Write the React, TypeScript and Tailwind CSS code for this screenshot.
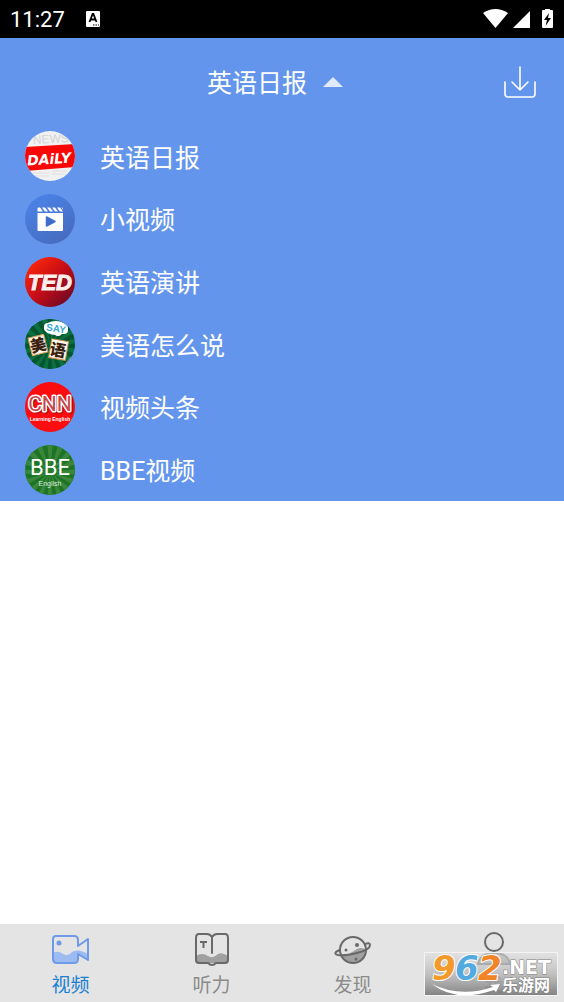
import { useState } from "react";
import type { ReactNode } from "react";

const RAYS = Array.from({ length: 16 }, (_, i) => i * 22.5);

function Rays({ cx, cy, color }: { cx: number; cy: number; color: string }) {
  return (
    <g fill={color}>
      {RAYS.map((angle) => (
        <path key={angle} d={`M${cx} ${cy} l50 -5 v10 Z`} transform={`rotate(${angle} ${cx} ${cy})`} />
      ))}
    </g>
  );
}

function Avatar({ id, children }: { id: string; children: ReactNode }) {
  return (
    <svg viewBox="0 0 50 50" className="size-[50px] shrink-0" aria-hidden="true">
      <clipPath id={id}>
        <circle cx="25" cy="25" r="25" />
      </clipPath>
      <g clipPath={`url(#${id})`}>{children}</g>
    </svg>
  );
}

const channels = [
  {
    name: "英语日报",
    icon: (
      <Avatar id="daily">
        <rect width="50" height="50" fill="#f1f1f1" />
        <text x="26" y="12" textAnchor="middle" fontFamily="Liberation Sans" fontSize="12" fill="#d2d2d2" transform="rotate(-3 25 12)">NEWS</text>
        <path d="M6 42 H24 M27 40 H42 M8 45 H24 M27 43 H41" stroke="#dfdfdf" strokeWidth="1" />
        <path d="M0 16 L50 13 V36 L0 40 Z" fill="#f90606" />
        <text x="24" y="33" textAnchor="middle" fontFamily="DejaVu Sans" fontStyle="italic" fontWeight="700" fontSize="14" fill="#fff" transform="rotate(-4 25 27)">DAiLY</text>
      </Avatar>
    ),
  },
  {
    name: "小视频",
    icon: (
      <Avatar id="clips">
        <linearGradient id="clipsFill" x1="0.2" y1="0" x2="0.8" y2="1">
          <stop offset="0" stopColor="#4b83e8" />
          <stop offset="1" stopColor="#466bbd" />
        </linearGradient>
        <rect width="50" height="50" fill="url(#clipsFill)" />
        <path d="M12.500 19 H38 V36 Q38 37 37 37 H13.500 Q12.500 37 12.500 36 Z" fill="#fff" />
        <path d="M12.500 14.500 Q12.500 13.500 13.500 13.500 H15 L18 17.500 H12.500 Z M17 13.500 H20 L23 17.500 H20 Z M22 13.500 H25 L28 17.500 H25 Z M27 13.500 H30 L33 17.500 H30 Z M32 13.500 H35 L38 17.500 H35 Z M36.500 13.500 H37 Q38 13.500 38 14.500 V15.500 Z" fill="#fff" />
        <path d="M21.500 23 L30 27.500 L21.500 32 Z" fill="#3e6dcb" stroke="#3e6dcb" strokeWidth="1.500" strokeLinejoin="round" />
      </Avatar>
    ),
  },
  {
    name: "英语演讲",
    icon: (
      <Avatar id="ted">
        <linearGradient id="tedFill" x1="0.1" y1="0.1" x2="0.9" y2="0.9">
          <stop offset="0" stopColor="#fb2808" />
          <stop offset="0.5" stopColor="#c70d17" />
          <stop offset="1" stopColor="#6c0824" />
        </linearGradient>
        <rect width="50" height="50" fill="url(#tedFill)" />
        <text x="26" y="34" textAnchor="middle" fontFamily="Liberation Sans" fontStyle="italic" fontWeight="700" fontSize="22" fill="#7c0712">TED</text>
        <text x="25" y="33" textAnchor="middle" fontFamily="Liberation Sans" fontStyle="italic" fontWeight="700" fontSize="22" fill="#fdeeee" stroke="#fdeeee">TED</text>
      </Avatar>
    ),
  },
  {
    name: "美语怎么说",
    icon: (
      <Avatar id="say">
        <rect width="50" height="50" fill="#0b7040" />
        <Rays cx={25} cy={27} color="#04552f" />
        <g fill="#fff">
          <ellipse cx="31" cy="9" rx="12" ry="7" />
          <circle cx="23" cy="8" r="4" />
          <circle cx="39" cy="11" r="4" />
          <circle cx="33" cy="13" r="4" />
        </g>
        <text x="31" y="13" textAnchor="middle" fontFamily="Liberation Sans" fontWeight="700" fontSize="10" fill="#39a9dc" transform="rotate(8 31 10)">SAY</text>
        <g transform="rotate(-14 13 26)">
          <rect x="5" y="17" width="16" height="18" fill="#fff8e8" stroke="#d8a05f" />
          <text x="13" y="32" textAnchor="middle" fontFamily="Noto Sans CJK SC" fontWeight="900" fontSize="16" fill="#39200f">美</text>
        </g>
        <g transform="rotate(10 33 31)">
          <rect x="25" y="21" width="17" height="19" fill="#fff8e8" stroke="#c98b4d" />
          <text x="33" y="37" textAnchor="middle" fontFamily="Noto Sans CJK SC" fontWeight="900" fontSize="16" fill="#39200f">语</text>
        </g>
        <path d="M50 36 L38 50 H50 Z" fill="#d8dfd0" />
        <path d="M47 38 L41 45" stroke="#8d9b83" strokeWidth="2" />
      </Avatar>
    ),
  },
  {
    name: "视频头条",
    icon: (
      <Avatar id="cnn">
        <rect width="50" height="50" fill="#fd0d10" />
        <g fontFamily="Roboto" fontSize="21" textAnchor="middle" fill="none" strokeLinejoin="round">
          <text x="26" y="30" stroke="#a00a0c" strokeWidth="3">CNN</text>
          <text x="25" y="29" fill="#fff" stroke="#fff" strokeWidth="3">CNN</text>
          <text x="25" y="29" fill="#c4474a">CNN</text>
        </g>
        <text x="25" y="39" textAnchor="middle" fontFamily="Liberation Sans" fontWeight="700" fontSize="5" fill="#fff">Learning English</text>
      </Avatar>
    ),
  },
  {
    name: "BBE视频",
    icon: (
      <Avatar id="bbe">
        <rect width="50" height="50" fill="#1c7424" />
        <Rays cx={25} cy={27} color="#3a873c" />
        <text x="25" y="30" textAnchor="middle" fontFamily="Roboto" fontSize="22" fill="#fff">BBE</text>
        <text x="25" y="41" textAnchor="middle" fontFamily="Liberation Sans" fontSize="7" fill="#dcebdc">English</text>
      </Avatar>
    ),
  },
];

const tabs = [
  {
    label: "视频",
    icon: (
      <svg viewBox="0 0 40 36" className="h-9 w-10" fill="none" stroke="#6f9ae9" strokeWidth="2" strokeLinejoin="round" aria-hidden="true">
        <path d="M2 21 Q7 18 12 22 Q17 25 21 20 Q27 16 37 22 V28 L27 23 V29 Q27 31 25 31 H5 Q2 31 2 28 Z" fill="#9bbbf1" stroke="none" />
        <path d="M5 4 H23 Q27 4 27 8 V14 L37 7 V28 L27 22 V27 Q27 31 23 31 H6 Q2 31 2 27 V7 Q2 4 5 4 Z" />
        <circle cx="8" cy="11" r="2.500" fill="#6f9ae9" stroke="none" />
      </svg>
    ),
  },
  {
    label: "听力",
    icon: (
      <svg viewBox="0 0 40 36" className="h-9 w-10" fill="none" stroke="#696969" strokeWidth="2" strokeLinejoin="round" aria-hidden="true">
        <path d="M4 24 Q10 20 16 24 Q21 27 26 22 Q30 20 36 24 V31 H4 Z" fill="#a0a0a0" stroke="none" />
        <path d="M20 5 Q18 2 15 2 H7 Q4 2 4 6 V28 Q4 31 7 31 H16 Q18 33 20 33 Q22 33 24 31 H33 Q36 31 36 28 V6 Q36 2 33 2 H25 Q22 2 20 5 Z" />
        <path d="M20 5 V21" strokeLinecap="round" />
        <path d="M8 10 H15 M11.500 10 V16" strokeWidth="2" />
      </svg>
    ),
  },
  {
    label: "发现",
    icon: (
      <svg viewBox="0 0 40 36" className="h-9 w-10" fill="none" stroke="#696969" strokeWidth="2" aria-hidden="true">
        <path d="M7 22 Q14 24 21 19 Q26 14 32 17 Q34 19 33 22 Q31 31 20 31 Q11 31 7 22 Z" fill="#a0a0a0" stroke="none" />
        <circle cx="20" cy="18" r="13" />
        <path d="M32 12 Q37 10 37 13 Q37 18 24 21 Q12 24 5 23 Q1 22 3 20 Q4 19 7 18" strokeWidth="2" />
        <circle cx="24" cy="13" r="2" fill="#696969" stroke="none" />
        <circle cx="13" cy="18" r="1.500" fill="#696969" stroke="none" />
        <circle cx="23" cy="27" r="1.500" fill="#696969" stroke="none" />
      </svg>
    ),
  },
  {
    label: "我",
    icon: (
      <svg viewBox="0 0 40 36" className="h-9 w-10" fill="none" stroke="#696969" strokeWidth="2" aria-hidden="true">
        <path d="M4 32 Q6 21 20 21 Q34 21 36 32 Z" fill="#a0a0a0" />
        <circle cx="20" cy="10" r="9" fill="#e4e4e4" />
      </svg>
    ),
  },
];

function StatusBar() {
  return (
    <div className="flex h-[38px] items-center justify-between bg-black px-2.5 text-white">
      <div className="flex items-center gap-5">
        <span className="font-[Roboto,sans-serif] text-[22px]">11:27</span>
        <svg viewBox="0 0 16 16" className="size-4" aria-hidden="true">
          <rect x="1" width="14" height="16" rx="1" fill="#fff" />
          <path d="M4.500 11 L7.600 3 H8.400 L11.500 11 M6 8.500 H10" fill="none" stroke="#000" strokeWidth="1.800" />
          <path d="M8 14 h1.500 M10.500 14 h1.500 M13 14 h1" stroke="#000" strokeWidth="1" />
        </svg>
      </div>
      <svg viewBox="0 0 71 20" className="h-5 w-[71px]" fill="#fff" aria-hidden="true">
        <path d="M0 4 Q12.500 -4 25 4 L12.500 19 Z" />
        <path d="M47 2 V19 H30 Z" />
        <path d="M62 0 H67 V1 H69 Q70 1 70 2 V18 Q70 19 69 19 H60 Q59 19 59 18 V2 Q59 1 60 1 H62 Z" />
        <path d="M66 4 L61 11 H64 L62.500 17 L68 9 H65 Z" fill="#000" />
      </svg>
    </div>
  );
}

function Watermark() {
  return (
    <svg viewBox="0 0 134 44" className="pointer-events-none absolute right-1.5 bottom-1.5 h-11 w-[134px] overflow-visible" role="img" aria-label="962.NET 乐游网">
      <linearGradient id="plate" x1="0" y1="0" x2="0" y2="1">
        <stop offset="0" stopColor="#e0e0e0" stopOpacity="0.600" />
        <stop offset="0.500" stopColor="#b4b4b4" stopOpacity="0.750" />
        <stop offset="1" stopColor="#777" stopOpacity="0.900" />
      </linearGradient>
      <rect x="0.500" y="0.500" width="133" height="43" fill="url(#plate)" stroke="#f4f4f4" />
      <path d="M8 32 Q36 46 69 35 L66 33 L76 32 L72 40 L70 38 Q32 51 8 32 Z" fill="#fff" />
      <g fontFamily="DejaVu Sans" fontStyle="italic" fontWeight="700" fontSize="34" stroke="#fff" strokeWidth="2" strokeLinejoin="round" paintOrder="stroke">
        <text x="8" y="28" fill="#f39a2d">9</text>
        <text x="31" y="28" fill="#53aade">6</text>
        <text x="54" y="28" fill="#f18427">2</text>
      </g>
      <g fill="#fff" stroke="#808080" strokeWidth="1" paintOrder="stroke" fontWeight="700">
        <text x="78" y="22" fontFamily="DejaVu Sans" fontSize="19">.NET</text>
        <text x="78" y="39" fontFamily="Noto Sans CJK SC" fontSize="16">乐游网</text>
      </g>
    </svg>
  );
}

export default function App() {
  const [open, setOpen] = useState(true);
  const [channel, setChannel] = useState(0);
  const [tab, setTab] = useState(0);

  return (
    <div className="flex min-h-screen flex-col bg-white font-[Roboto,'Noto_Sans_CJK_SC',sans-serif]">
      <StatusBar />
      <header className="grid h-[87px] grid-cols-[1fr_auto_1fr] items-center bg-[#6495ec] px-7 text-white">
        <button
          onClick={() => setOpen(!open)}
          aria-expanded={open}
          className="col-start-2 flex items-center gap-4 pr-3.5 text-[25px]"
        >
          <span className="pt-1">{channels[channel].name}</span>
          <svg viewBox="0 0 20 10" className={open ? "h-2.5 w-5" : "h-2.5 w-5 rotate-180"} aria-hidden="true">
            <path d="M10 0 L20 10 H0 Z" fill="#e0eafb" />
          </svg>
        </button>
        <button aria-label="下载" className="justify-self-end">
          <svg viewBox="0 0 32 32" className="size-8" fill="none" stroke="#fff" strokeWidth="1.600" strokeLinecap="round" strokeLinejoin="round" aria-hidden="true">
            <path d="M16 1 V23 M8 16 L16 24 L24 16" />
            <path d="M1 16 V28 Q1 31 4 31 H28 Q31 31 31 28 V16" />
          </svg>
        </button>
      </header>
      {open && (
        <ul className="grid min-h-[376px] auto-rows-fr bg-[#6495ec] text-[25px] text-white">
          {channels.map((item, i) => (
            <li key={item.name}>
              <button onClick={() => setChannel(i)} className="flex h-full w-full items-center gap-[25px] px-[25px] text-left">
                {item.icon}
                <span className="pt-1">{item.name}</span>
              </button>
            </li>
          ))}
        </ul>
      )}
      <main className="flex-1" />
      <nav className="relative grid h-[78px] grid-cols-4 bg-[#e4e4e4] text-[19px]">
        {tabs.map((item, i) => (
          <button
            key={item.label}
            onClick={() => setTab(i)}
            className={`flex flex-col items-center pt-2 ${tab === i ? "text-[#1b80d1]" : "text-[#8b8b8b]"}`}
          >
            {item.icon}
            <span className="leading-9">{item.label}</span>
          </button>
        ))}
        <Watermark />
      </nav>
    </div>
  );
}
